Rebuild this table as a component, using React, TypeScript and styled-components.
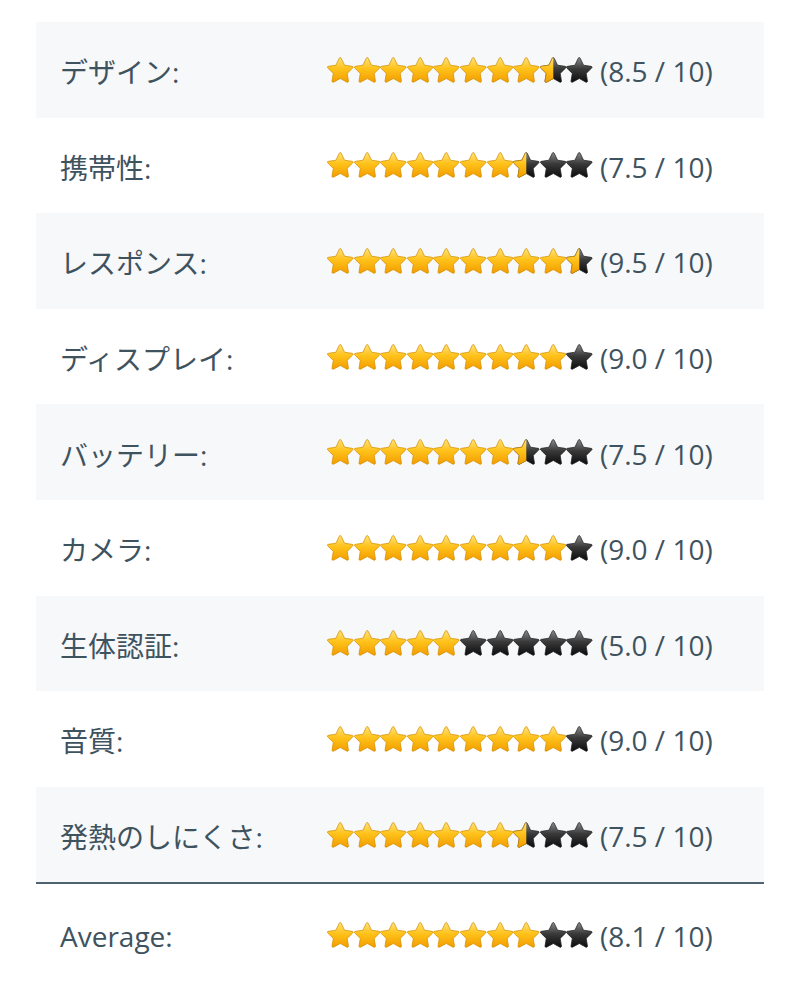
import React, { useId } from "react";
import styled, { createGlobalStyle } from "styled-components";

const GlobalStyle = createGlobalStyle`
  body {
    margin: 0;
    background: #ffffff;
    font-family: "Open Sans", "Noto Sans CJK JP", sans-serif;
  }
`;

const Page = styled.div`
  padding: 22px 36px 0 36px;
`;

const Table = styled.div`
  display: flex;
  flex-direction: column;
`;

const Row = styled.div<{ $shaded?: boolean; $total?: boolean }>`
  display: flex;
  align-items: center;
  height: ${(p) => (p.$total ? "100px" : "95.6px")};
  padding: ${(p) => (p.$total ? "6px" : "3px")} 24px 0 24px;
  box-sizing: border-box;
  background: ${(p) => (p.$shaded ? "#f6f8fa" : "#ffffff")};
  border-top: ${(p) => (p.$total ? "2px solid #4d6470" : "none")};
  color: #3f535f;
  font-size: 28px;
`;

const Label = styled.div`
  width: 267px;
  flex-shrink: 0;
`;

const Rating = styled.div`
  display: flex;
  align-items: center;
`;

const Stars = styled.div`
  display: flex;
  margin-right: 7px;
  margin-top: -3px;
`;

const StarSvg = styled.svg`
  width: 26.6px;
  height: 26px;
  display: block;
`;

const Score = styled.span`
  white-space: nowrap;
`;

const STAR =
  "M12 1.6c.3 0 .6.2.7.5l2.7 5.6 6.1.9c.7.1.9.9.4 1.3l-4.4 4.3 1 6.1c.1.7-.6 1.2-1.2.9L12 18.3l-5.4 2.9c-.6.3-1.3-.2-1.2-.9l1-6.1L2 9.9c-.5-.4-.3-1.2.4-1.3l6.1-.9 2.7-5.6c.1-.3.4-.5.8-.5z";

// fill: 1 = full, 0.5 = half, 0 = empty
function Star({ fill }: { fill: number }) {
  const id = useId().replace(/:/g, "");
  return (
    <StarSvg viewBox="1.4 1.2 21.2 20.6">
      <defs>
        <linearGradient id={`g${id}`} x1="0" y1="0" x2="0" y2="1">
          <stop offset="0" stopColor="#ffe27a" />
          <stop offset="0.45" stopColor="#ffc21a" />
          <stop offset="1" stopColor="#f29d00" />
        </linearGradient>
        <linearGradient id={`d${id}`} x1="0" y1="0" x2="0" y2="1">
          <stop offset="0" stopColor="#8a8a8a" />
          <stop offset="0.45" stopColor="#3a3a3a" />
          <stop offset="1" stopColor="#0c0c0c" />
        </linearGradient>
        <clipPath id={`c${id}`}>
          <rect x="0" y="0" width={24 * fill} height="24" />
        </clipPath>
      </defs>
      {fill < 1 && (
        <path d={STAR} fill={`url(#d${id})`} stroke="#222" strokeWidth="0.6" />
      )}
      {fill > 0 && (
        <path
          d={STAR}
          fill={`url(#g${id})`}
          stroke="#d68f00"
          strokeWidth="0.6"
          clipPath={`url(#c${id})`}
        />
      )}
    </StarSvg>
  );
}

function StarRating({ value }: { value: number }) {
  const stars = [];
  for (let i = 0; i < 10; i++) {
    const f = Math.max(0, Math.min(1, value - i));
    const fill = f >= 0.75 ? 1 : f >= 0.25 ? 0.5 : 0;
    stars.push(<Star key={i} fill={fill} />);
  }
  return <Stars>{stars}</Stars>;
}

const ratings = [
  { label: "デザイン:", value: 8.5 },
  { label: "携帯性:", value: 7.5 },
  { label: "レスポンス:", value: 9.5 },
  { label: "ディスプレイ:", value: 9.0 },
  { label: "バッテリー:", value: 7.5 },
  { label: "カメラ:", value: 9.0 },
  { label: "生体認証:", value: 5.0 },
  { label: "音質:", value: 9.0 },
  { label: "発熱のしにくさ:", value: 7.5 },
];

export default function App() {
  const avg = 8.1;
  return (
    <>
      <GlobalStyle />
      <Page>
        <Table>
          {ratings.map((r, i) => (
            <Row key={r.label} $shaded={i % 2 === 0}>
              <Label>{r.label}</Label>
              <Rating>
                <StarRating value={r.value} />
                <Score>({r.value.toFixed(1)} / 10)</Score>
              </Rating>
            </Row>
          ))}
          <Row $total>
            <Label>Average:</Label>
            <Rating>
              <StarRating value={avg} />
              <Score>({avg.toFixed(1)} / 10)</Score>
            </Rating>
          </Row>
        </Table>
      </Page>
    </>
  );
}
